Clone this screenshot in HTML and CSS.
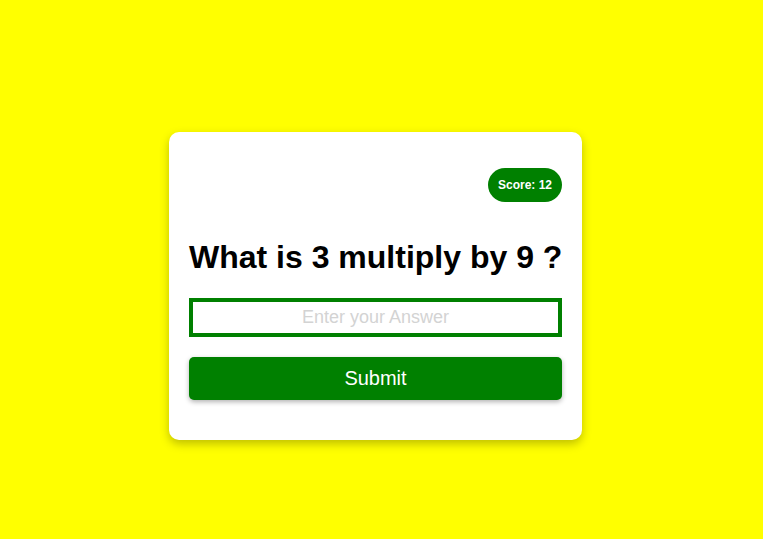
FILE: index.html
```html
<!DOCTYPE html>
<html>
<head>
<meta charset="utf-8">
<link rel="stylesheet" href="styles.css">
</head>
<body>
<div class="card">
  <div class="top">
    <span class="score">Score: 12</span>
  </div>
  <h1 class="question">What is 3 multiply by 9 ?</h1>
  <input class="answer" type="text" placeholder="Enter your Answer">
  <button class="submit">Submit</button>
</div>
</body>
</html>
```
FILE: styles.css
```css
html, body {
  margin: 0;
  padding: 0;
}
body {
  background: #ffff00;
  font-family: "Liberation Sans", Arial, sans-serif;
  display: flex;
  justify-content: center;
  align-items: flex-start;
  padding: 132px 12px 0 0;
  height: 539px;
  box-sizing: border-box;
}
.card {
  width: 413px;
  box-sizing: border-box;
  background: #fff;
  border-radius: 10px;
  padding: 36px 20px 40px;
  box-shadow: 0 4px 10px rgba(0, 0, 0, 0.25);
  display: flex;
  flex-direction: column;
}
.top {
  display: flex;
  justify-content: flex-end;
}
.score {
  background: #008000;
  color: #fff;
  font-size: 12px;
  font-weight: bold;
  line-height: 14px;
  padding: 10px;
  border-radius: 20px;
}
.question {
  margin: 37px 0 22px;
  font-size: 32px;
  font-weight: bold;
  color: #000;
  white-space: nowrap;
}
.answer {
  display: block;
  width: 100%;
  box-sizing: border-box;
  height: 39px;
  border: 4px solid #008000;
  padding: 0 4px;
  font-family: "Liberation Sans", Arial, sans-serif;
  font-size: 18px;
  text-align: center;
  outline: none;
  margin: 0;
}
.answer::placeholder {
  color: #d3d3d3;
}
.submit {
  margin-top: 20px;
  height: 43px;
  width: 100%;
  background: #008000;
  color: #fff;
  border: none;
  border-radius: 5px;
  font-family: "Liberation Sans", Arial, sans-serif;
  font-size: 20px;
  box-shadow: 0 2px 5px rgba(0, 0, 0, 0.3);
}
```
